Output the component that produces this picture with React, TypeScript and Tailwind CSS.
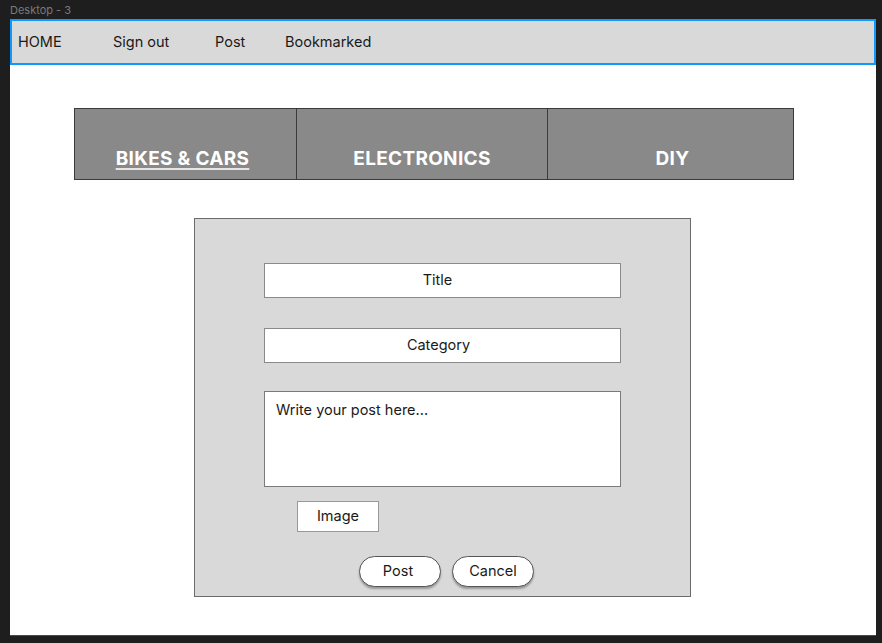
import React from 'react';

const NAV_ITEMS = [
    { label: 'HOME', width: 'w-[95px]' },
    { label: 'Sign out', width: 'w-[102px]' },
    { label: 'Post', width: 'w-[70px]' },
    { label: 'Bookmarked', width: 'w-auto' },
];

export default function App() {
    return (
        <div className="w-[882px] h-[643px] bg-[#1e1e1e] pl-[10px] overflow-hidden" style={{ fontFamily: 'Inter, "Noto Sans", sans-serif' }}>
            {/* Frame label */}
            <div className="h-[19px] text-[11px] leading-[21px] text-[#7a7a7a]">Desktop - 3</div>

            {/* Frame */}
            <div className="w-[866px] h-[617px] bg-white border-b border-[#4a4a4a] flex flex-col">
                {/* Nav */}
                <nav className="h-[46px] bg-[#d9d9d9] border-2 border-[#0d99ff] flex items-center pl-[6px] text-[14.5px] text-[#1a1a1a]">
                    {NAV_ITEMS.map(item => (
                        <span key={item.label} className={item.width}>{item.label}</span>
                    ))}
                </nav>

                {/* Categories */}
                <div className="ml-[64px] mt-[43px] w-[720px] h-[72px] bg-[#898989] border border-[#3a3a3a] flex text-white text-[19px] font-bold leading-[22px] tracking-[0.3px]">
                    <div className="w-[222px] border-r border-[#3a3a3a] pt-[39px] pr-[6px] flex justify-center">
                        <span className="underline decoration-[1.5px] underline-offset-[3px] decoration-[#e5e5e5]">BIKES &amp; CARS</span>
                    </div>
                    <div className="w-[251px] border-r border-[#3a3a3a] pt-[39px] flex justify-center">
                        <span>ELECTRONICS</span>
                    </div>
                    <div className="flex-1 pt-[39px] pl-[4px] flex justify-center">
                        <span>DIY</span>
                    </div>
                </div>

                {/* Post form */}
                <div className="ml-[184px] mt-[38px] w-[497px] h-[379px] bg-[#d9d9d9] border border-[#6b6b6b] flex flex-col text-[14.5px] text-[#1a1a1a]">
                    <div className="ml-[69px] mt-[44px] w-[357px] h-[35px] bg-white border border-[#8a8a8a] flex items-center justify-center pr-[10px] pb-[2px]">
                        Title
                    </div>
                    <div className="ml-[69px] mt-[30px] w-[357px] h-[35px] bg-white border border-[#8a8a8a] flex items-center justify-center pr-[8px] pb-[2px]">
                        Category
                    </div>
                    <div className="ml-[69px] mt-[28px] w-[357px] h-[96px] bg-white border border-[#7a7a7a] px-[11px] pt-[8px] leading-[20px]">
                        Write your post here...
                    </div>
                    <div className="ml-[102px] mt-[14px] w-[82px] h-[31px] bg-white border border-[#999999] flex items-center justify-center pb-[2px]">
                        Image
                    </div>
                    <div className="ml-[164px] mt-[24px] flex gap-[11px]">
                        <button className="w-[82px] h-[31px] bg-white border border-[#555555] rounded-full shadow-[0_2px_2px_rgba(0,0,0,0.3)] flex items-center justify-center pr-[4px] pb-[2px]">
                            Post
                        </button>
                        <button className="w-[82px] h-[31px] bg-white border border-[#555555] rounded-full shadow-[0_2px_2px_rgba(0,0,0,0.3)] flex items-center justify-center pb-[2px]">
                            Cancel
                        </button>
                    </div>
                </div>
            </div>
        </div>
    );
}
